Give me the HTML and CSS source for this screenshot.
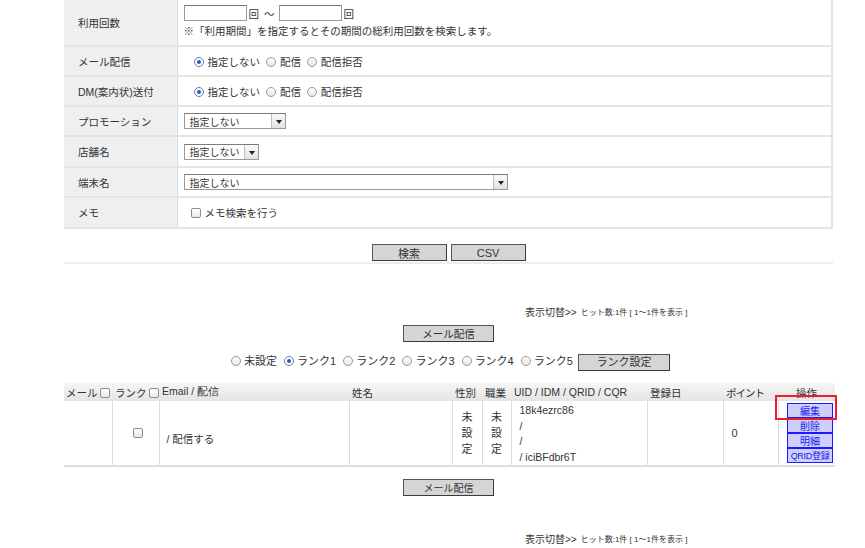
FILE: index.html
```html
<!DOCTYPE html>
<html lang="ja">
<head>
<meta charset="utf-8">
<link rel="stylesheet" href="styles.css">
</head>
<body>
<div class="page">
  <table class="form">
    <tr class="r1">
      <th>利用回数</th>
      <td>
        <div class="line"><span class="txt"></span><span class="unit">回</span><span class="tilde">〜</span><span class="txt"></span><span class="unit">回</span></div>
        <div class="note">※「利用期間」を指定するとその期間の総利用回数を検索します。</div>
      </td>
    </tr>
    <tr class="r2">
      <th>メール配信</th>
      <td class="opts"><span class="radio on"></span>指定しない <span class="radio"></span>配信 <span class="radio"></span>配信拒否</td>
    </tr>
    <tr class="r2">
      <th>DM(案内状)送付</th>
      <td class="opts"><span class="radio on"></span>指定しない <span class="radio"></span>配信 <span class="radio"></span>配信拒否</td>
    </tr>
    <tr class="r2">
      <th>プロモーション</th>
      <td><div class="select w102"><span class="val">指定しない</span><span class="arrow"></span></div></td>
    </tr>
    <tr class="r3">
      <th>店舗名</th>
      <td><div class="select w75"><span class="val">指定しない</span><span class="arrow"></span></div></td>
    </tr>
    <tr class="r2">
      <th>端末名</th>
      <td><div class="select w324"><span class="val">指定しない</span><span class="arrow"></span></div></td>
    </tr>
    <tr class="r3">
      <th>メモ</th>
      <td class="opts"><span class="check"></span>メモ検索を行う</td>
    </tr>
  </table>

  <div class="actions">
    <span class="btn b75">検索</span>
    <span class="btn b75 en">CSV</span>
  </div>
  <div class="sep"></div>

  <div class="hits first"><span class="hl">表示切替&gt;&gt;</span><span class="hs">ヒット数:1件 [ 1〜1件を表示 ]</span></div>

  <div class="center mail"><span class="btn b91">メール配信</span></div>

  <div class="center rank">
    <span class="radio"></span>未設定
    <span class="radio on"></span>ランク1
    <span class="radio"></span>ランク2
    <span class="radio"></span>ランク3
    <span class="radio"></span>ランク4
    <span class="radio"></span>ランク5
    <span class="btn b92">ランク設定</span>
  </div>

  <table class="list">
    <colgroup>
      <col class="c48"><col class="c47"><col class="c190"><col class="c103"><col class="c30"><col class="c29"><col class="c136"><col class="c76"><col class="c55"><col class="c57">
    </colgroup>
    <thead>
      <tr>
        <th>メール <span class="check"></span></th>
        <th>ランク <span class="check"></span></th>
        <th class="en">Email / 配信</th>
        <th>姓名</th>
        <th>性別</th>
        <th>職業</th>
        <th class="en">UID / IDM / QRID / CQR</th>
        <th>登録日</th>
        <th class="narrow">ポイント</th>
        <th class="c">操作</th>
      </tr>
    </thead>
    <tbody>
      <tr>
        <td></td>
        <td class="cc"><span class="check"></span></td>
        <td class="pl">/ 配信する</td>
        <td></td>
        <td class="vert">未<br>設<br>定</td>
        <td class="vert">未<br>設<br>定</td>
        <td class="uid">18k4ezrc86<br>/<br>/<br>/ iciBFdbr6T</td>
        <td></td>
        <td class="pt">0</td>
        <td class="ops">
          <div class="opwrap">
            <span class="op">編集</span>
            <span class="op">削除</span>
            <span class="op">明細</span>
            <span class="op small">QRID登録</span>
            <span class="hilite"></span>
          </div>
        </td>
      </tr>
    </tbody>
  </table>

  <div class="center mail2"><span class="btn b91 alt">メール配信</span></div>

  <div class="hits last"><span class="hl">表示切替&gt;&gt;</span><span class="hs">ヒット数:1件 [ 1〜1件を表示 ]</span></div>
</div>
</body>
</html>
```

FILE: styles.css
```css
* { box-sizing: border-box; }
body {
  margin: 0;
  background: #fff;
  color: #333;
  font-family: "Liberation Sans", "Noto Sans CJK JP", sans-serif;
  font-size: 11px;
}
.page {
  margin-left: 64px;
  width: 771px;
}

/* ---------- search form ---------- */
.form {
  width: 769px;
  border-collapse: collapse;
  border-right: 2px solid #e4e4e4;
  border-bottom: 2px solid #e4e4e4;
}
.form th, .form td {
  border-top: 2px solid #e4e4e4;
  padding: 0;
  vertical-align: middle;
}
.form tr:first-child th, .form tr:first-child td { border-top: 0; }
.form th {
  width: 113px;
  background: #efefef;
  border-right: 1px solid #dcdcdc;
  text-align: left;
  font-weight: normal;
  padding-left: 14px;
  font-size: 10.5px;
  color: #333;
}
.form td { padding-left: 6px; font-size: 10.5px; }
.form .r1 { height: 46px; }
.form .r2 { height: 30px; }
.form .r3 { height: 31px; }
.line {
  display: flex;
  align-items: center;
  height: 16px;
  margin-top: -2px;
}
.txt {
  display: inline-block;
  width: 63px;
  height: 16px;
  border: 1px solid #9a9a9a;
  border-top-color: #777;
  background: #fff;
}
.unit { margin-left: 2px; }
.tilde { margin-left: 5px; margin-right: 4px; }
.note { margin-top: 2px; color: #333; }
.opts { padding-left: 13px !important; }

.radio {
  display: inline-block;
  width: 10px;
  height: 10px;
  border: 1px solid #9a9a9a;
  border-radius: 50%;
  background: linear-gradient(#fff, #e6e6e6);
  vertical-align: -1px;
  margin-right: 4px;
  margin-left: 3px;
  position: relative;
}
.radio.on {
  border-color: #5a7fb8;
  background: #fff;
}
.radio.on::after {
  content: "";
  position: absolute;
  left: 2px; top: 2px;
  width: 4px; height: 4px;
  border-radius: 50%;
  background: #2a5aa8;
}
.check {
  display: inline-block;
  width: 10px;
  height: 10px;
  border: 1px solid #8e8e8e;
  border-radius: 2px;
  background: linear-gradient(#fff, #e8e8e8);
  vertical-align: -1px;
  margin-right: 4px;
}

.select {
  display: flex;
  align-items: center;
  height: 16px;
  border: 1px solid #999;
  border-top-color: #7a7a7a;
  background: #fff;
  font-size: 10px;
}
.select .val { flex: 1; padding-left: 5px; }
.select .arrow {
  width: 14px;
  height: 14px;
  border-left: 1px solid #bbb;
  background: linear-gradient(#fafafa, #e2e2e2);
  position: relative;
}
.select .arrow::after {
  content: "";
  position: absolute;
  left: 4px; top: 6px;
  border-left: 3px solid transparent;
  border-right: 3px solid transparent;
  border-top: 4px solid #222;
}
.w102 { width: 102px; }
.w75 { width: 75px; }
.w324 { width: 324px; }

/* ---------- buttons ---------- */
.actions {
  display: flex;
  justify-content: center;
  gap: 4px;
  margin-top: 15px;
  width: 769px;
}
.btn {
  display: inline-flex;
  align-items: center;
  justify-content: center;
  height: 17px;
  background: #d5d5d5;
  border: 1px solid #3a3a3a;
  border-top-color: #555;
  border-left-color: #555;
  font-size: 11px;
  color: #333;
}
.b75 { width: 75px; }
.b91 { width: 91px; }
.b92 { width: 92px; vertical-align: middle; margin-left: 2px; }
.en { font-family: "Liberation Sans", sans-serif; }
.sep {
  height: 2px;
  background: #ececec;
  width: 769px;
  margin-top: 1px;
}

.hits {
  padding-left: 461px;
  height: 14px;
  display: flex;
  align-items: center;
  white-space: nowrap;
}
.hits.first { margin-top: 40px; }
.hits .hl { font-size: 10px; color: #333; }
.hits .hs { font-size: 8px; margin-left: 4px; color: #333; }

.center { text-align: center; width: 769px; }
.mail { margin-top: 7px; }
.mail .btn { font-size: 10.5px; }
.rank { margin-top: 10px; font-size: 11px; height: 18px; line-height: 18px; }
.rank .radio { margin-left: 4px; margin-right: 3px; }

/* ---------- result list ---------- */
.list {
  width: 771px;
  border-collapse: collapse;
  table-layout: fixed;
  margin-top: 13px;
}
.c48 { width: 48px; } .c47 { width: 47px; } .c190 { width: 190px; } .c103 { width: 103px; }
.c30 { width: 30px; } .c29 { width: 29px; } .c136 { width: 136px; } .c76 { width: 76px; }
.c55 { width: 55px; } .c57 { width: 57px; }
.list thead th {
  height: 18px;
  background: linear-gradient(#f6f6f6, #e4e4e4);
  font-weight: normal;
  font-size: 10.5px;
  text-align: left;
  padding: 0 0 0 3px;
  white-space: nowrap;
  overflow: visible;
  color: #333;
}
.list thead th:first-child { padding-left: 2px; }
.list thead th.c { text-align: center; padding-left: 0; }
.list thead th.narrow { letter-spacing: -1px; }
.list thead th .check { margin-left: 0; margin-right: 0; }
.list tbody td {
  height: 64px;
  border-left: 1px solid #dcdcdc;
  border-bottom: 2px solid #dcdcdc;
  padding: 0;
  vertical-align: middle;
  font-size: 10.5px;
}
.list tbody td:first-child { border-left: 0; }
.list .cc { text-align: center; padding-left: 4px; }
.list .cc .check { margin: 0; }
.list .pl { padding-left: 7px; padding-top: 10px; }
.list .vert { text-align: center; line-height: 16px; font-size: 11px; }
.list .uid { padding-left: 8px; line-height: 15.5px; font-size: 10.5px; vertical-align: top; padding-top: 2px; }
.list .pt { padding-left: 8px; font-size: 11px; }
.list .ops { vertical-align: top; }
.opwrap {
  position: relative;
  display: flex;
  flex-direction: column;
  align-items: flex-end;
  padding-top: 2px;
  padding-right: 2px;
}
.op {
  display: flex;
  align-items: center;
  justify-content: center;
  width: 46px;
  height: 15px;
  background: #cfcfff;
  border: 1px solid #1a1aff;
  color: #1a1aee;
  font-size: 10px;
  white-space: nowrap;
  overflow: hidden;
}
.op.small { font-size: 9px; letter-spacing: -0.3px; }
.hilite {
  position: absolute;
  left: -4px;
  top: -6px;
  width: 62px;
  height: 25px;
  border: 2px solid #e8202a;
}

.mail2 { margin-top: 12px; }
.alt { font-size: 10px; }
.hits.last { margin-top: 35px; }
```
